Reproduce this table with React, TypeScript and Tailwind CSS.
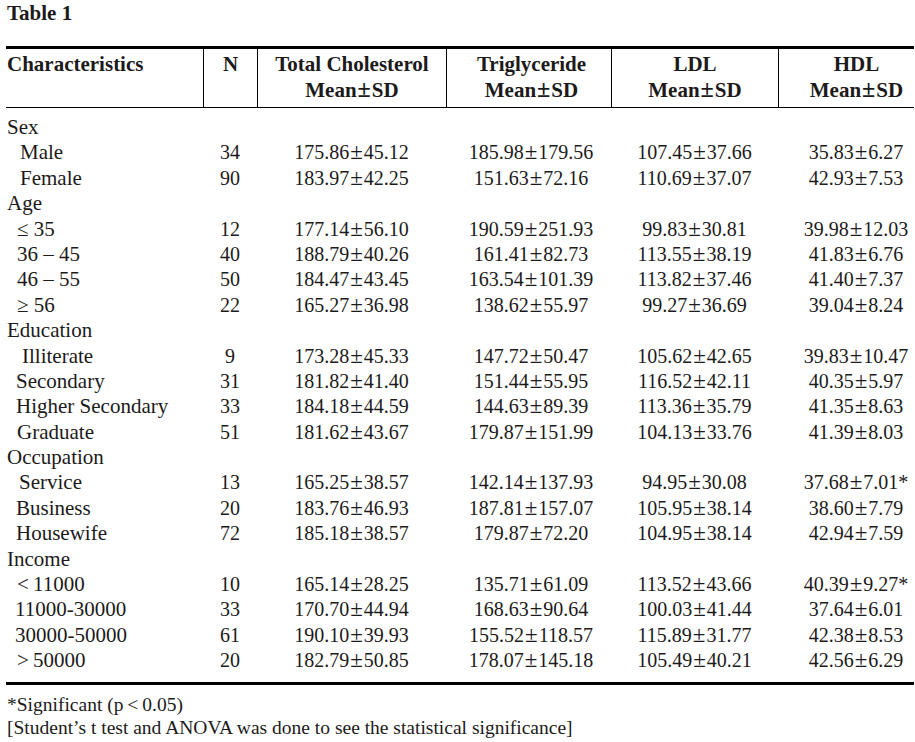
type Row = { label: string; pad?: string; n?: string; vals?: string[] };

const rows: Row[] = [
  { label: 'Sex' },
  { label: 'Male', pad: 'pl-[14px]', n: '34', vals: ['175.86±45.12', '185.98±179.56', '107.45±37.66', '35.83±6.27'] },
  { label: 'Female', pad: 'pl-[14px]', n: '90', vals: ['183.97±42.25', '151.63±72.16', '110.69±37.07', '42.93±7.53'] },
  { label: 'Age' },
  { label: '≤ 35', pad: 'pl-[11px]', n: '12', vals: ['177.14±56.10', '190.59±251.93', '99.83±30.81', '39.98±12.03'] },
  { label: '36 – 45', pad: 'pl-[11px]', n: '40', vals: ['188.79±40.26', '161.41±82.73', '113.55±38.19', '41.83±6.76'] },
  { label: '46 – 55', pad: 'pl-[11px]', n: '50', vals: ['184.47±43.45', '163.54±101.39', '113.82±37.46', '41.40±7.37'] },
  { label: '≥ 56', pad: 'pl-[11px]', n: '22', vals: ['165.27±36.98', '138.62±55.97', '99.27±36.69', '39.04±8.24'] },
  { label: 'Education' },
  { label: 'Illiterate', pad: 'pl-[16px]', n: '9', vals: ['173.28±45.33', '147.72±50.47', '105.62±42.65', '39.83±10.47'] },
  { label: 'Secondary', pad: 'pl-[10px]', n: '31', vals: ['181.82±41.40', '151.44±55.95', '116.52±42.11', '40.35±5.97'] },
  { label: 'Higher Secondary', pad: 'pl-[10px]', n: '33', vals: ['184.18±44.59', '144.63±89.39', '113.36±35.79', '41.35±8.63'] },
  { label: 'Graduate', pad: 'pl-[11px]', n: '51', vals: ['181.62±43.67', '179.87±151.99', '104.13±33.76', '41.39±8.03'] },
  { label: 'Occupation' },
  { label: 'Service', pad: 'pl-[13px]', n: '13', vals: ['165.25±38.57', '142.14±137.93', '94.95±30.08', '37.68±7.01*'] },
  { label: 'Business', pad: 'pl-[10px]', n: '20', vals: ['183.76±46.93', '187.81±157.07', '105.95±38.14', '38.60±7.79'] },
  { label: 'Housewife', pad: 'pl-[10px]', n: '72', vals: ['185.18±38.57', '179.87±72.20', '104.95±38.14', '42.94±7.59'] },
  { label: 'Income' },
  { label: '<\u200911000', pad: 'pl-[11px]', n: '10', vals: ['165.14±28.25', '135.71±61.09', '113.52±43.66', '40.39±9.27*'] },
  { label: '11000-30000', pad: 'pl-[9px]', n: '33', vals: ['170.70±44.94', '168.63±90.64', '100.03±41.44', '37.64±6.01'] },
  { label: '30000-50000', pad: 'pl-[9px]', n: '61', vals: ['190.10±39.93', '155.52±118.57', '115.89±31.77', '42.38±8.53'] },
  { label: '>\u200950000', pad: 'pl-[11px]', n: '20', vals: ['182.79±50.85', '178.07±145.18', '105.49±40.21', '42.56±6.29'] },
];

const cols = 'grid grid-cols-[197px_54px_189px_165px_167px_136px]';
// value cells get a small nudge so they sit where the print puts them
const valPad = ['', 'pl-[5px]', '', 'pl-[20px]'];

// the print sets ± a bit bigger and wider than the font does
function PM({ v }: { v: string }) {
  const [a, b] = v.split('±');
  return (
    <>
      {a}
      <span className="mx-[1px] text-[1.15em] leading-none">±</span>
      {b}
    </>
  );
}

export default function App() {
  return (
    <div className="min-h-[742px] w-[915px] overflow-hidden bg-white text-[#1c1a1a] font-['Liberation_Serif','Times_New_Roman',serif]">
      <div className="pl-[7px] text-[21px] font-bold leading-[26px]">Table 1</div>

      <div className="mx-[6px] mt-[20px] w-[908px] border-t-[3px] border-b-[3px] border-black">
        {/* header */}
        <div className={`${cols} h-[59px] border-b border-black text-[21px] font-bold leading-[26px]`}>
          <div className="pl-px pt-[2px]">Characteristics</div>
          <div className="border-l border-black pt-[2px] text-center">N</div>
          <div className="border-l border-black pt-[2px] text-center">
            Total Cholesterol
            <br />
            <PM v="Mean±SD" />
          </div>
          <div className="border-l border-black pl-[5px] pt-[2px] text-center">
            Triglyceride
            <br />
            <PM v="Mean±SD" />
          </div>
          <div className="border-l border-black pt-[2px] text-center">
            LDL
            <br />
            <PM v="Mean±SD" />
          </div>
          <div className="border-l border-black pl-[20px] pt-[2px] text-center">
            HDL
            <br />
            <PM v="Mean±SD" />
          </div>
        </div>

        {/* body */}
        <div className="pt-[7px] pb-[8px]">
          {rows.map((r) => (
            <div key={r.label} className={`${cols} h-[25.4px] items-center leading-[25.4px]`}>
              <div className={`text-[21px] ${r.pad ?? 'pl-px'}`}>{r.label}</div>
              <div className="text-center text-[20px]">{r.n}</div>
              {(r.vals ?? ['', '', '', '']).map((v, i) => (
                <div key={i} className={`text-center text-[20px] ${valPad[i]}`}>
                  {v && <PM v={v} />}
                </div>
              ))}
            </div>
          ))}
        </div>
      </div>

      {/* notes */}
      <div className="pl-[7px] pt-[8px] text-[19.5px] leading-[23px]">
        <div>*Significant (p{'\u2009'}&lt;{'\u2009'}0.05)</div>
        <div>[Student’s t test and ANOVA was done to see the statistical significance]</div>
      </div>
    </div>
  );
}
